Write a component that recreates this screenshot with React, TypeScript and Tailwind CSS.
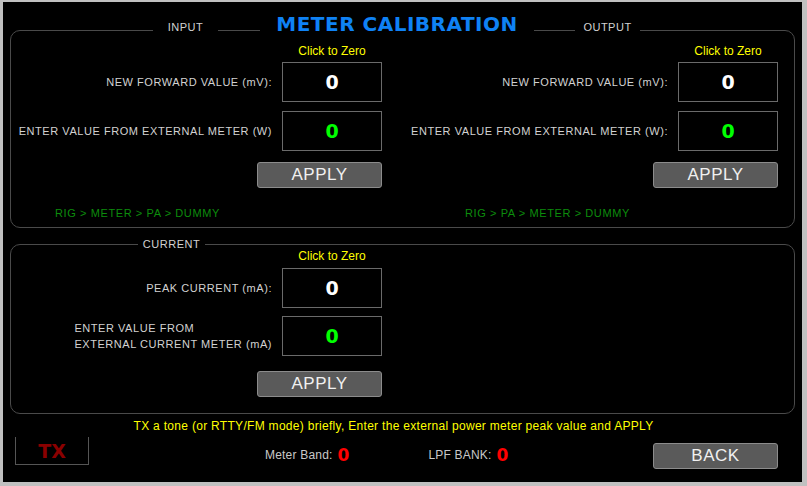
import React from 'react'

/**
 * Meter calibration screen (radio transceiver settings)
 */

const LABEL = 'text-[11px] leading-[14px] tracking-[0.55px] text-[#d2d2d2]'
const DIGIT = "font-['DejaVu_Sans',sans-serif] font-bold text-[19px] leading-[20px]"

interface ValueRowProps {
  label: React.ReactNode
  value: string
  green?: boolean
  className?: string
}

const ValueRow: React.FC<ValueRowProps> = ({ label, value, green, className = '' }) => (
  <div className={`flex items-center justify-end gap-[10px] ${className}`}>
    <div className={LABEL}>{label}</div>
    <div className="w-[100px] h-[40px] border border-[#6a6a6a] flex items-center justify-center">
      <span className={`${DIGIT} ${green ? 'text-[#00ff00]' : 'text-white'}`}>{value}</span>
    </div>
  </div>
)

const GrayButton: React.FC<{ label: string; className?: string }> = ({ label, className = '' }) => (
  <button
    className={`w-[125px] h-[26px] rounded-[3px] bg-[#5a5a5a] border border-[#8c8c8c] text-[17px] leading-[24px] tracking-[0.5px] text-[#f0f0f0] ${className}`}
  >
    {label}
  </button>
)

const ClickToZero: React.FC = () => (
  <div className="w-[100px] text-center text-[12px] leading-[14px] text-[#ffff00]">Click to Zero</div>
)

const Legend: React.FC<{ text: string; className: string }> = ({ text, className }) => (
  <div
    className={`absolute h-[14px] bg-black text-center text-[11px] leading-[14px] tracking-[0.5px] text-[#d2d2d2] ${className}`}
  >
    {text}
  </div>
)

interface SideProps {
  path: string
  pathOffset: string
  withColon?: boolean
  className?: string
}

const CalibrationSide: React.FC<SideProps> = ({ path, pathOffset, withColon, className = '' }) => (
  <div className={`flex flex-col items-end pt-[13px] ${className}`}>
    <ClickToZero />
    <ValueRow className="mt-[4px]" label="NEW FORWARD VALUE (mV):" value="0" />
    <ValueRow
      className="mt-[9px]"
      label={withColon ? 'ENTER VALUE FROM EXTERNAL METER (W):' : 'ENTER VALUE FROM EXTERNAL METER (W)'}
      value="0"
      green
    />
    <GrayButton className="mt-[11px]" label="APPLY" />
    <div className={`self-start mt-[18px] text-[11px] leading-[14px] tracking-[0.6px] text-[#0c8c0c] ${pathOffset}`}>
      {path}
    </div>
  </div>
)

export default function App() {
  return (
    <div className="w-[807px] h-[486px] bg-[#c0c0c0] pt-[2px] pl-[3px] pr-[5px] pb-[4px] font-['Liberation_Sans',Arial,sans-serif]">
      <div className="h-full bg-black flex flex-col">
        {/* Forward power: input / output */}
        <div className="relative mt-[28px] mx-[7px] h-[198px] border border-[#4a4a4a] rounded-[10px] flex">
          <Legend text="INPUT" className="left-[142px] top-[-11px] w-[65px]" />
          <div className="absolute left-[249px] top-[-19px] w-[274px] h-[24px] bg-black text-center font-['DejaVu_Sans',sans-serif] font-bold text-[20px] leading-[24px] tracking-[0.5px] text-[#0f82f5]">
            METER CALIBRATION
          </div>
          <Legend text="OUTPUT" className="left-[564px] top-[-11px] w-[65px]" />

          <CalibrationSide className="w-[388px] pr-[17px]" path="RIG > METER > PA > DUMMY" pathOffset="ml-[44px]" />
          <CalibrationSide
            className="flex-1 pr-[16px]"
            path="RIG > PA > METER > DUMMY"
            pathOffset="ml-[66px]"
            withColon
          />
        </div>

        {/* Current */}
        <div className="relative mt-[16px] mx-[7px] h-[170px] border border-[#4a4a4a] rounded-[10px] flex">
          <Legend text="CURRENT" className="left-[127px] top-[-8px] w-[67px]" />
          <div className="w-[388px] pr-[17px] pt-[4px] flex flex-col items-end">
            <ClickToZero />
            <ValueRow className="mt-[5px]" label="PEAK CURRENT (mA):" value="0" />
            <ValueRow
              className="mt-[8px]"
              label={
                <div className="leading-[16px]">
                  ENTER VALUE FROM
                  <br />
                  EXTERNAL CURRENT METER (mA)
                </div>
              }
              value="0"
              green
            />
            <GrayButton className="mt-[15px]" label="APPLY" />
          </div>
        </div>

        {/* Hint */}
        <div className="mt-[5px] pr-[18px] text-center text-[12px] leading-[14px] tracking-[0.3px] text-[#ffff00]">
          TX a tone (or RTTY/FM mode) briefly, Enter the external power meter peak value and APPLY
        </div>

        {/* Status row */}
        <div className="mt-[4px] flex items-start">
          <div className="ml-[12px] w-[74px] h-[28px] border-l border-r border-b border-[#555] flex items-center justify-center">
            <span className="font-['DejaVu_Sans',sans-serif] font-bold text-[19px] leading-[20px] text-[#8b0000]">TX</span>
          </div>
          <div className="ml-[176px] mt-[11px] h-[14px] flex items-center gap-[5px]">
            <span className="text-[12px] leading-[14px] tracking-[0.2px] text-[#c8c8c8]">Meter Band:</span>
            <span className="font-['DejaVu_Sans',sans-serif] font-bold text-[17px] leading-[14px] text-[#ff0000]">0</span>
          </div>
          <div className="ml-[79px] mt-[11px] h-[14px] flex items-center gap-[5px]">
            <span className="text-[12px] leading-[14px] tracking-[0.2px] text-[#c8c8c8]">LPF BANK:</span>
            <span className="font-['DejaVu_Sans',sans-serif] font-bold text-[17px] leading-[14px] text-[#ff0000]">0</span>
          </div>
          <GrayButton className="ml-auto mr-[24px] mt-[6px]" label="BACK" />
        </div>
      </div>
    </div>
  )
}
